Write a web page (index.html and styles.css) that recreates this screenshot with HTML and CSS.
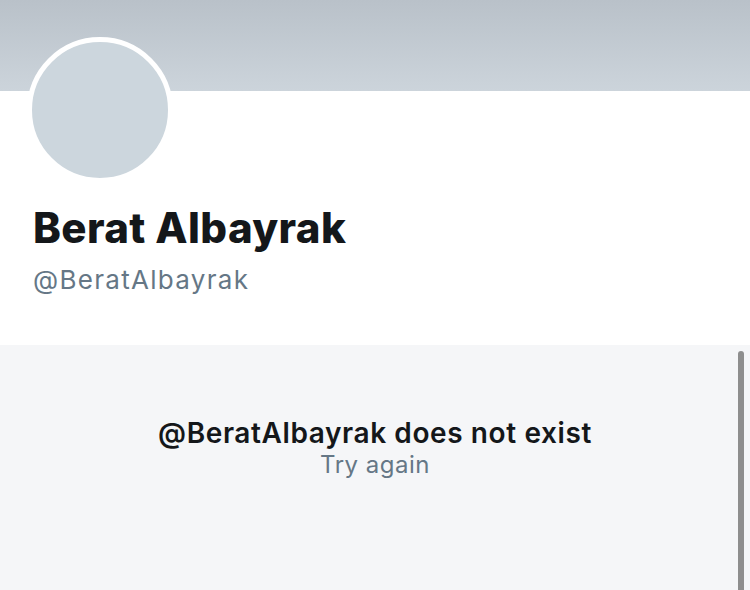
FILE: index.html
```html
<!DOCTYPE html>
<html>
<head>
<meta charset="utf-8">
<link rel="stylesheet" href="styles.css">
</head>
<body>
<div class="page">
  <header class="profile">
    <div class="banner"></div>
    <div class="info">
      <div class="avatar"></div>
      <h1 class="name">Berat Albayrak</h1>
      <div class="handle">@BeratAlbayrak</div>
    </div>
  </header>
  <section class="empty">
    <div class="message">@BeratAlbayrak does not exist</div>
    <div class="retry">Try again</div>
    <div class="scrollbar"></div>
  </section>
</div>
</body>
</html>
```
FILE: styles.css
```css
html, body {
  margin: 0;
  padding: 0;
  height: 100%;
  overflow: hidden;
}
body {
  font-family: Inter, "Liberation Sans", sans-serif;
  background: #ffffff;
}
.page {
  display: flex;
  flex-direction: column;
  height: 590px;
}
.banner {
  height: 91px;
  background: linear-gradient(180deg, #b9c1c9 0%, #ccd4db 100%);
}
.info {
  position: relative;
  height: 254px;
  padding-left: 33px;
  box-sizing: border-box;
  display: flex;
  flex-direction: column;
}
.avatar {
  position: absolute;
  left: 27px;
  top: -54px;
  width: 136px;
  height: 136px;
  border-radius: 50%;
  border: 5px solid #ffffff;
  background: #ccd6dd;
}
.name {
  margin: 113px 0 0 0;
  font-size: 42px;
  font-weight: 800;
  color: #14171a;
  line-height: 48px;
  letter-spacing: 0.4px;
}
.handle {
  margin-top: 11px;
  font-size: 26px;
  color: #657786;
  line-height: 34px;
  letter-spacing: 1.3px;
}
.empty {
  position: relative;
  flex: 1;
  background: #f5f6f8;
  display: flex;
  flex-direction: column;
  align-items: center;
  padding-top: 71px;
}
.message {
  font-size: 28px;
  font-weight: 600;
  color: #14171a;
  line-height: 34px;
  letter-spacing: 0.6px;
}
.retry {
  font-size: 24px;
  color: #657786;
  line-height: 30px;
  letter-spacing: 0.5px;
}
.scrollbar {
  position: absolute;
  right: 6px;
  top: 6px;
  bottom: 0;
  width: 6px;
  border-radius: 3px 3px 0 0;
  background: #8e8e8e;
}
```
